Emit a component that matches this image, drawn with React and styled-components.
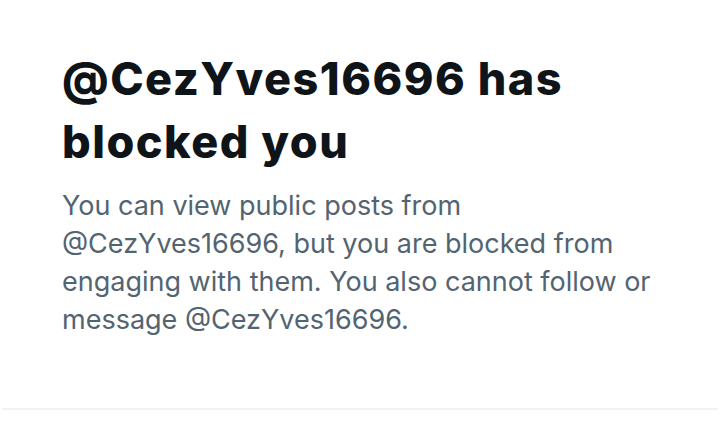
import React from "react";
import styled, { createGlobalStyle } from "styled-components";

const Global = createGlobalStyle`
  html, body { margin: 0; padding: 0; background: #ffffff; }
  body { font-family: Inter, Roboto, sans-serif; }
`;

const Page = styled.div`
  width: 720px;
  height: 424px;
  display: flex;
  flex-direction: column;
  box-sizing: border-box;
`;

const Content = styled.div`
  padding: 47px 62px 0 62px;
  height: 408px;
  box-sizing: border-box;
`;

const Title = styled.h1`
  margin: 0;
  font-size: 45px;
  line-height: 63px;
  font-weight: 800;
  letter-spacing: 1.5px;
  color: #0f1419;
`;

const Body = styled.p`
  margin: 14px 0 0 0;
  font-size: 27px;
  line-height: 38px;
  font-weight: 400;
  color: #536471;
`;

const Divider = styled.div`
  margin: 0 2px;
  height: 2px;
  background: #eff3f4;
`;

export default function App() {
  return (
    <Page>
      <Global />
      <Content>
        <Title>@CezYves16696 has blocked you</Title>
        <Body>
          You can view public posts from @CezYves16696, but you are blocked from
          engaging with them. You also cannot follow or message @CezYves16696.
        </Body>
      </Content>
      <Divider />
    </Page>
  );
}
